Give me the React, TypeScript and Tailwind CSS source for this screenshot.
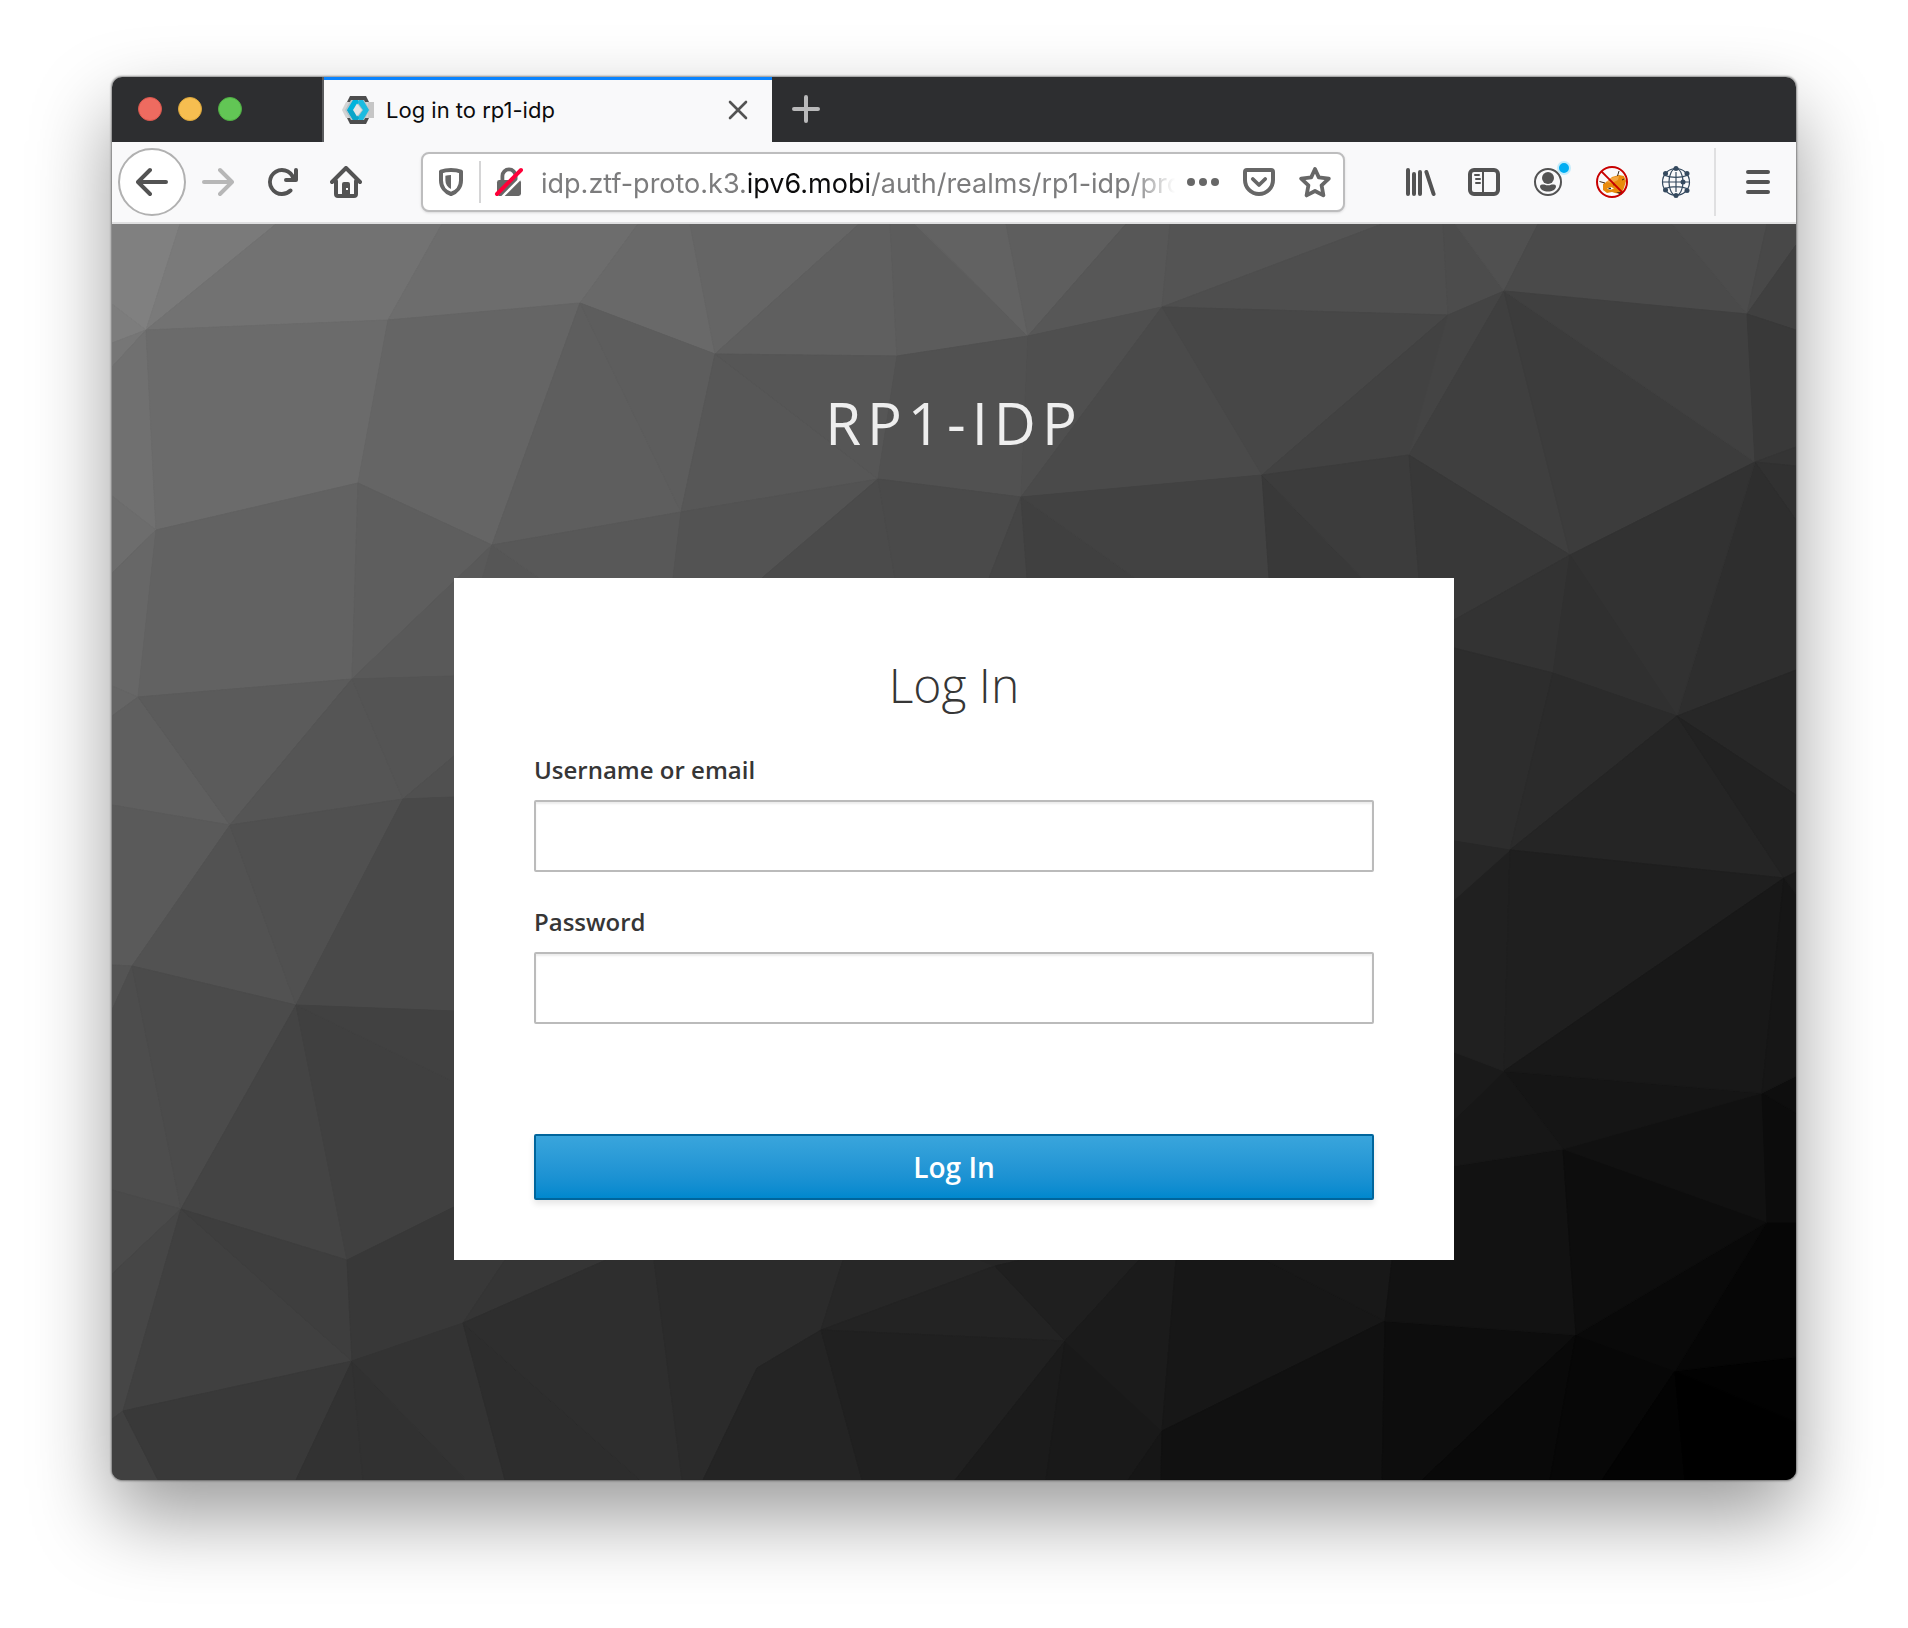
import type { ReactNode } from "react";

const facets: [string, string][] = [
  ["0,0 68,0 34,106 0,80", "#808080"],
  ["68,0 164,0 34,106", "#7a7a7a"],
  ["164,0 330,0 276,96 34,106", "#727272"],
  ["330,0 526,0 468,79 276,96", "#6d6d6d"],
  ["526,0 578,0 603,130 468,79", "#696969"],
  ["578,0 747,0 603,130", "#656565"],
  ["747,0 778,0 785,132 603,130", "#5f5f5f"],
  ["778,0 803,0 916,112 785,132", "#5c5c5c"],
  ["803,0 894,0 916,112", "#626262"],
  ["894,0 1014,0 916,112", "#5e5e5e"],
  ["1014,0 1058,0 1050,83 916,112", "#575757"],
  ["1058,0 1270,0 1050,83", "#545454"],
  ["1270,0 1331,0 1336,91 1050,83", "#4e4e4e"],
  ["1331,0 1343,0 1392,67 1336,91", "#4c4c4c"],
  ["1343,0 1426,0 1392,67", "#505050"],
  ["1426,0 1560,0 1635,90 1392,67", "#4a4a4a"],
  ["1560,0 1655,0 1635,90", "#4c4c4c"],
  ["1655,0 1684,0 1684,21 1635,90", "#484848"],
  ["1684,21 1684,106 1635,90", "#404040"],
  ["0,80 34,106 0,119", "#7d7d7d"],
  ["0,119 34,106 0,143", "#767676"],
  ["0,143 34,106 44,306 0,272", "#707070"],
  ["34,106 276,96 246,259 44,306", "#6b6b6b"],
  ["276,96 468,79 380,321 246,259", "#656565"],
  ["468,79 569,288 380,321", "#5e5e5e"],
  ["468,79 603,130 569,288", "#5d5d5d"],
  ["603,130 766,255 569,288", "#575757"],
  ["603,130 785,132 766,255", "#565656"],
  ["785,132 916,112 909,273 766,255", "#515151"],
  ["916,112 1050,83 909,273", "#4f4f4f"],
  ["1050,83 1150,251 909,273", "#4a4a4a"],
  ["1050,83 1336,91 1150,251", "#474747"],
  ["1336,91 1297,231 1150,251", "#424242"],
  ["1336,91 1392,67 1297,231", "#444444"],
  ["1392,67 1458,331 1297,231", "#3f3f3f"],
  ["1392,67 1643,238 1458,331", "#3c3c3c"],
  ["1392,67 1635,90 1643,238", "#404040"],
  ["1635,90 1684,106 1684,223 1643,238", "#393939"],
  ["1643,238 1684,223 1684,242", "#353535"],
  ["1643,238 1684,242 1684,296", "#313131"],
  ["1643,238 1684,296 1684,446 1565,492", "#2e2e2e"],
  ["1643,238 1565,492 1458,331", "#323232"],
  ["0,272 44,306 0,349", "#6d6d6d"],
  ["0,349 44,306 26,473 0,462", "#676767"],
  ["44,306 246,259 240,455 26,473", "#626262"],
  ["246,259 380,321 240,455", "#5e5e5e"],
  ["380,321 394,354 342,452 240,455", "#595959"],
  ["380,321 427,354 342,452", "#565656"],
  ["380,321 569,288 561,354 427,354", "#585858"],
  ["569,288 766,255 650,354 561,354", "#535353"],
  ["766,255 783,354 783,600 650,354", "#4b4b4b"],
  ["766,255 909,273 877,354 783,354", "#4a4a4a"],
  ["909,273 915,354 877,354", "#454545"],
  ["909,273 1023,354 915,354", "#404040"],
  ["909,273 1150,251 1157,354 1023,354", "#424242"],
  ["1150,251 1250,354 1157,354", "#393939"],
  ["1150,251 1297,231 1307,354 1250,354", "#3c3c3c"],
  ["1297,231 1458,331 1342,396 1307,354", "#383838"],
  ["1458,331 1441,449 1342,424 1342,396", "#333333"],
  ["1458,331 1565,492 1441,449", "#303030"],
  ["1342,424 1441,449 1398,626 1342,617", "#2d2d2d"],
  ["1441,449 1565,492 1398,626", "#2b2b2b"],
  ["1565,492 1672,654 1398,626", "#252525"],
  ["1565,492 1684,446 1684,571", "#272727"],
  ["1565,492 1684,571 1684,648 1672,654", "#222222"],
  ["0,462 26,473 0,492", "#656565"],
  ["0,492 26,473 118,601 0,581", "#5f5f5f"],
  ["26,473 240,455 118,601", "#5b5b5b"],
  ["240,455 291,575 118,601", "#555555"],
  ["240,455 342,452 342,532 291,575", "#545454"],
  ["342,532 342,573 291,575", "#505050"],
  ["0,581 118,601 20,742 0,741", "#5a5a5a"],
  ["118,601 184,781 20,742", "#525252"],
  ["118,601 291,575 184,781", "#505050"],
  ["291,575 342,573 342,787 184,781", "#494949"],
  ["0,741 20,742 0,786", "#545454"],
  ["20,742 69,985 0,966 0,786", "#4d4d4d"],
  ["20,742 184,781 69,985", "#4b4b4b"],
  ["184,781 235,1036 69,985", "#444444"],
  ["184,781 342,858 342,983 235,1036", "#404040"],
  ["184,781 342,787 342,858", "#414141"],
  ["0,966 69,985 0,1050", "#4a4a4a"],
  ["0,1050 69,985 11,1187 0,1195", "#464646"],
  ["69,985 240,1137 11,1187", "#404040"],
  ["69,985 235,1036 240,1137", "#3e3e3e"],
  ["235,1036 342,983 393,1036 351,1099 240,1137", "#383838"],
  ["393,1036 494,1036 351,1099", "#353535"],
  ["0,1195 11,1187 46,1256 0,1256", "#404040"],
  ["11,1187 240,1137 184,1256 46,1256", "#393939"],
  ["240,1137 251,1256 184,1256", "#323232"],
  ["240,1137 354,1256 251,1256", "#313131"],
  ["240,1137 351,1099 393,1256 354,1256", "#333333"],
  ["351,1099 528,1256 393,1256", "#2d2d2d"],
  ["351,1099 494,1036 542,1036 570,1256 528,1256", "#2e2e2e"],
  ["542,1036 731,1036 709,1106 645,1144 591,1256 570,1256", "#2b2b2b"],
  ["731,1036 868,1036 883,1042 709,1106", "#272727"],
  ["868,1036 909,1036 883,1042", "#252525"],
  ["709,1106 883,1042 953,1117", "#232323"],
  ["645,1144 709,1106 750,1256 591,1256", "#242424"],
  ["709,1106 953,1117 843,1256 750,1256", "#202020"],
  ["883,1042 909,1036 1027,1036 953,1117", "#1f1f1f"],
  ["953,1117 934,1256 843,1256", "#1b1b1b"],
  ["953,1117 1050,1207 1016,1256 934,1256", "#191919"],
  ["1027,1036 1064,1036 1050,1207 953,1117", "#1b1b1b"],
  ["1050,1207 1049,1256 1016,1256", "#161616"],
  ["1064,1036 1153,1036 1273,1097 1050,1207", "#171717"],
  ["1153,1036 1280,1036 1273,1097", "#181818"],
  ["1273,1097 1270,1256 1049,1256 1050,1207", "#111111"],
  ["1273,1097 1464,1111 1310,1256 1270,1256", "#0d0d0d"],
  ["1280,1036 1342,942 1451,925 1464,1111 1273,1097", "#121212"],
  ["1464,1111 1438,1256 1310,1256", "#090909"],
  ["1464,1111 1563,1147 1490,1256 1438,1256", "#070707"],
  ["1563,1147 1573,1256 1490,1256", "#030303"],
  ["1563,1147 1684,1198 1684,1256 1573,1256", "#000000"],
  ["1563,1147 1684,1133 1684,1198", "#020202"],
  ["1655,998 1684,998 1684,1133 1563,1147", "#060606"],
  ["1655,998 1563,1147 1464,1111", "#090909"],
  ["1451,925 1655,998 1464,1111", "#0d0d0d"],
  ["1451,925 1650,869 1655,998", "#111111"],
  ["1650,869 1684,889 1684,998 1655,998", "#0c0c0c"],
  ["1650,869 1684,852 1684,889", "#0e0e0e"],
  ["1392,847 1650,869 1451,925", "#151515"],
  ["1342,896 1392,847 1451,925 1342,942", "#171717"],
  ["1342,828 1392,847 1342,896", "#1a1a1a"],
  ["1342,676 1398,626 1392,847 1342,828", "#202020"],
  ["1342,617 1398,626 1342,676", "#272727"],
  ["1398,626 1672,654 1392,847", "#1f1f1f"],
  ["1672,654 1650,869 1392,847", "#181818"],
  ["1672,654 1684,670 1684,852 1650,869", "#161616"],
  ["1672,654 1684,648 1684,670", "#1a1a1a"],
];

function PolygonBackdrop() {
  return (
    <svg
      aria-hidden="true"
      className="absolute inset-0 h-full w-full"
      viewBox="0 0 1684 1256"
      preserveAspectRatio="none"
    >
      <rect width="1684" height="1256" fill="#303030" />
      {facets.map(([points, fill]) => (
        <polygon key={points} points={points} fill={fill} stroke={fill} strokeWidth="1" strokeLinejoin="round" />
      ))}
    </svg>
  );
}

function Icon({ children, className = "" }: { children: ReactNode; className?: string }) {
  return (
    <svg aria-hidden="true" viewBox="0 0 16 16" className={`size-8 shrink-0 ${className}`} fill="currentColor">
      {children}
    </svg>
  );
}

function ToolButton({ label, children }: { label: string; children: ReactNode }) {
  return (
    <button type="button" aria-label={label} className="relative flex h-16 w-16 shrink-0 items-center justify-center text-[#535353]">
      {children}
    </button>
  );
}

function Favicon() {
  return (
    <svg aria-hidden="true" viewBox="0 0 32 32" className="size-8 shrink-0">
      <path d="M8 2h16l3 6H5z" fill="#4d4d4d" />
      <path d="M5 24h22l-3 6H8z" fill="#4d4d4d" />
      <path d="M4 8h28v16H4l-4-8z" fill="#d4d4d4" />
      <path d="M26 8h6v16h-6z" fill="#c6c6c6" />
      <path d="M9 6h13l6 10-6 10H9L3 16z" fill="#b4c4c9" />
      <path d="M11 6h5l1 2-4 8 4 8-1 2h-5L5 16z" fill="#00b3dc" />
      <path d="M17 6h4l6 10-6 10h-4l-1-3 5-7-5-7z" fill="#1cbbe0" />
      <path d="M5 16h8l4 8-1 2h-5z" fill="#0ca5c9" />
      <path d="M15 9.500l5 6.500-5 6.500-4-6.500z" fill="#e6e6e6" />
    </svg>
  );
}

function TabStrip() {
  return (
    <div className="flex h-[65px] bg-[#2d2e30]">
      <div className="flex w-[212px] shrink-0 items-center gap-4 border-r-2 border-[#5a5b5d] pb-0.5 pl-[26px]">
        <button type="button" aria-label="Close window" className="size-6 rounded-full border border-[#d9564d] bg-[#ee6b60]" />
        <button type="button" aria-label="Minimize window" className="size-6 rounded-full border border-[#dba63b] bg-[#f6be50]" />
        <button type="button" aria-label="Zoom window" className="size-6 rounded-full border border-[#4fae43] bg-[#62c655]" />
      </div>
      <div className="flex w-[448px] items-center border-t-[3px] border-[#0a84ff] bg-[#f9f9fa] pr-6 pb-0.5 pl-[18px]">
        <Favicon />
        <span className="ml-3 flex-1 truncate text-[22px] text-[#0c0c0d]">Log in to rp1-idp</span>
        <button type="button" aria-label="Close tab" className="text-[#535353]">
          <svg aria-hidden="true" viewBox="0 0 20 20" className="size-5" stroke="currentColor" strokeWidth="2.6" strokeLinecap="round">
            <path d="M2 2l16 16M18 2L2 18" />
          </svg>
        </button>
      </div>
      <button type="button" aria-label="New tab" className="flex w-[68px] items-center justify-center pb-0.5 text-[#b9b9ba]">
        <svg aria-hidden="true" viewBox="0 0 28 28" className="size-7" stroke="currentColor" strokeWidth="4" strokeLinecap="round">
          <path d="M14 2v24M2 14h24" />
        </svg>
      </button>
    </div>
  );
}

function AddressBar() {
  return (
    <div className="flex h-[60px] min-w-0 flex-1 items-center rounded-lg border-2 border-[#bdbdbe] bg-white pr-3 text-[#676767] shadow-sm">
      <button type="button" aria-label="Tracking protection" className="ml-3 flex">
        <Icon>
          <path
            d="M8 2c2.1 0 3.7.3 5 .8v4.4c0 3.300-2.200 5.800-5 6.800-2.800-1-5-3.500-5-6.800V2.800C4.300 2.300 5.900 2 8 2z"
            fill="none"
            stroke="currentColor"
            strokeWidth="2"
            strokeLinejoin="round"
          />
          <path d="M8 4.500v7C6.200 10.600 5.200 9.200 5.200 7V4.900C6 4.600 7 4.500 8 4.500z" />
        </Icon>
      </button>
      <div className="mx-3 h-[42px] w-[2px] bg-[#d5d5d6]" />
      <button type="button" aria-label="Connection is not secure" className="flex">
        <Icon>
          <path d="M4.700 7.500V5a3.300 3.300 0 0 1 6.600 0v2.500" fill="none" stroke="currentColor" strokeWidth="1.900" />
          <rect x="2" y="7" width="12" height="8" rx="1.200" />
          <path d="M4 16L16.500 3.500" stroke="#ffffff" strokeWidth="1.200" />
          <path d="M2 14L14 2" stroke="#ff0039" strokeWidth="2" strokeLinecap="round" />
        </Icon>
      </button>
      <div
        role="textbox"
        aria-label="Address"
        className="ml-4 min-w-0 flex-1 overflow-hidden pt-1 text-[27px] whitespace-nowrap text-[#7c7c7d] [mask-image:linear-gradient(to_right,black_calc(100%-44px),transparent)]"
      >
        idp.ztf-proto.k3.<span className="text-[#0c0c0d]">ipv6.mobi</span>/auth/realms/rp1-idp/protocol
      </div>
      <div className="ml-3 flex shrink-0 items-center gap-6">
        <button type="button" aria-label="Page actions" className="flex">
          <Icon>
            <circle cx="2" cy="8" r="2" />
            <circle cx="8" cy="8" r="2" />
            <circle cx="14" cy="8" r="2" />
          </Icon>
        </button>
        <button type="button" aria-label="Save to Pocket" className="flex">
          <Icon>
            <path
              d="M2 2h12a1 1 0 0 1 1 1v4a7 7 0 0 1-14 0V3a1 1 0 0 1 1-1z"
              fill="none"
              stroke="currentColor"
              strokeWidth="2"
            />
            <path d="M4.900 6.500L8 9.500l3.100-3" fill="none" stroke="currentColor" strokeWidth="1.900" strokeLinecap="round" strokeLinejoin="round" />
          </Icon>
        </button>
        <button type="button" aria-label="Bookmark this page" className="flex">
          <Icon>
            <path
              d="M8 1.500l1.900 4.200 5 .6-3.600 3.400.9 5L8 12.500l-4.200 2.200.9-5L1.100 6.300l5-.6z"
              fill="none"
              stroke="currentColor"
              strokeWidth="1.900"
              strokeLinejoin="round"
            />
          </Icon>
        </button>
      </div>
    </div>
  );
}

function FoxIcon() {
  return (
    <svg aria-hidden="true" viewBox="0 0 32 32" className="size-8">
      <path d="M6 21l3 6 6 2 9-1 5-2 1-6z" fill="#ffffff" />
      <path d="M7 18l5-3 4-4 7-2 5 1 2 5-2 7-3 6-6-1-3-1-5 1-4-3z" fill="#e98b0c" />
      <path d="M10 16l5-4 8-2-1 4-6 3z" fill="#f3a742" />
      <path d="M3.500 15.500l5.500 1.500M23 5l-1.500 5M17 19l2-1M26 14l2-1" stroke="#3c2a16" strokeWidth="1" />
      <path d="M11 22.500l4-1.500 3 1.500-4 1.500z" fill="#ffffff" />
      <path d="M12.500 22.500h2.500" stroke="#222222" strokeWidth="1.500" />
      <path d="M20 26l5 3 2-3z" fill="#5b3713" />
      <circle cx="16" cy="16" r="15" fill="none" stroke="#c80000" strokeWidth="2" />
      <path d="M5.400 5.400l21.200 21.200" stroke="#c80000" strokeWidth="2" />
    </svg>
  );
}

function GlobeIcon() {
  return (
    <svg aria-hidden="true" viewBox="0 0 32 32" className="size-8 text-[#34495e]" fill="none" stroke="currentColor" strokeWidth="1.200">
      <circle cx="16" cy="16" r="13.500" />
      <ellipse cx="16" cy="16" rx="7" ry="13.500" />
      <path d="M16 6v20M2.500 16h27M5 9.500c6 2.500 16 2.500 22 0M5 22.500c6-2.500 16-2.500 22 0" />
      <g fill="currentColor" stroke="none">
        <circle cx="16" cy="2.500" r="2.500" />
        <circle cx="16" cy="29.500" r="2.500" />
        <circle cx="5.500" cy="7.500" r="2.500" />
        <circle cx="27" cy="7.500" r="2.500" />
        <circle cx="5.500" cy="24" r="2.500" />
        <circle cx="27" cy="24.500" r="2.500" />
        <circle cx="23" cy="16" r="2.500" />
      </g>
    </svg>
  );
}

function Toolbar() {
  return (
    <div className="flex h-[82px] items-center border-b-2 border-[#e0e0e1] bg-[#f9f9fa] px-[6px]">
      <button
        type="button"
        aria-label="Back"
        className="flex size-[68px] shrink-0 items-center justify-center rounded-full border-2 border-[#b1b1b1] bg-white text-[#535353]"
      >
        <Icon>
          <path d="M15 7H3.414l4.293-4.293a1 1 0 0 0-1.414-1.414l-6 6a1 1 0 0 0 0 1.414l6 6a1 1 0 0 0 1.414-1.414L3.414 9H15a1 1 0 0 0 0-2z" />
        </Icon>
      </button>
      <ToolButton label="Forward">
        <Icon className="text-[#b7b7b7]">
          <path d="M1 7h11.586L8.293 2.707a1 1 0 0 1 1.414-1.414l6 6a1 1 0 0 1 0 1.414l-6 6a1 1 0 0 1-1.414-1.414L12.586 9H1a1 1 0 0 1 0-2z" />
        </Icon>
      </ToolButton>
      <ToolButton label="Reload">
        <Icon>
          <path d="M15 1a1 1 0 0 0-1 1v2.418A6.995 6.995 0 1 0 8 15a6.954 6.954 0 0 0 4.950-2.050 1 1 0 0 0-1.414-1.414A5.019 5.019 0 1 1 12.549 6H10a1 1 0 0 0 0 2h5a1 1 0 0 0 1-1V2a1 1 0 0 0-1-1z" />
        </Icon>
      </ToolButton>
      <ToolButton label="Home">
        <Icon>
          <path d="M1 8l7-7 7 7M3 7.500V14a1 1 0 0 0 1 1h8a1 1 0 0 0 1-1V7.500" fill="none" stroke="currentColor" strokeWidth="2" strokeLinecap="round" strokeLinejoin="round" />
          <path fillRule="evenodd" d="M6 15V9a1 1 0 0 1 1-1h2a1 1 0 0 1 1 1v6zM8 11v1h1v-1z" />
        </Icon>
      </ToolButton>
      <div className="w-[43px] shrink-0" />
      <AddressBar />
      <div className="w-[43px] shrink-0" />
      <ToolButton label="Library">
        <Icon>
          <g fill="none" stroke="currentColor" strokeWidth="2" strokeLinecap="round">
            <path d="M2 2v12M5 4v10M8 3v11M11.200 3L14.800 14" />
          </g>
        </Icon>
      </ToolButton>
      <ToolButton label="Sidebars">
        <Icon>
          <rect x="1" y="2" width="14" height="12" rx="2" fill="none" stroke="currentColor" strokeWidth="2" />
          <path d="M7.500 2v12M3.500 4.500h2M4 6.500h2M4 8.500h2" fill="none" stroke="currentColor" strokeWidth="1" strokeLinecap="round" />
        </Icon>
      </ToolButton>
      <ToolButton label="Account">
        <Icon>
          <circle cx="8" cy="8" r="6.500" fill="none" stroke="currentColor" strokeWidth="1" />
          <circle cx="8" cy="6" r="3" />
          <path d="M5 9.200h1.200c1.200.6 2.400.6 3.600 0H11a1 1 0 0 1 1 1c0 1.500-2 2.500-4 2.500s-4-1-4-2.500a1 1 0 0 1 1-1z" />
        </Icon>
        <span className="absolute top-[11px] right-[9px] size-[14px] rounded-full border-2 border-[#c3ecfb] bg-[#00adf2]" />
      </ToolButton>
      <ToolButton label="Fox blocker">
        <FoxIcon />
      </ToolButton>
      <ToolButton label="Network">
        <GlobeIcon />
      </ToolButton>
      <div className="mr-[10px] ml-[6px] h-[68px] w-[2px] shrink-0 bg-[#e0e0e1]" />
      <ToolButton label="Menu">
        <Icon>
          <path d="M3 3h10M3 8h10M3 13h10" stroke="currentColor" strokeWidth="2" strokeLinecap="round" />
        </Icon>
      </ToolButton>
    </div>
  );
}

function Field({ id, label, type }: { id: string; label: string; type: string }) {
  return (
    <div className="flex flex-col gap-2.5">
      <label htmlFor={id} className="text-2xl/10 font-semibold text-[#363636]">
        {label}
      </label>
      <input
        id={id}
        type={type}
        className="h-[72px] w-full rounded-xs border-2 border-[#bbbbbb] bg-white px-3 text-2xl shadow-[inset_0_2px_2px_rgba(3,3,3,0.075)] outline-none"
      />
    </div>
  );
}

function LoginCard() {
  return (
    <form
      onSubmit={(event) => event.preventDefault()}
      className="flex w-full max-w-[1000px] flex-col bg-white px-20 pt-20 pb-[60px]"
    >
      <h2 className="text-center text-5xl/[54px] font-light text-[#363636]">Log In</h2>
      <div className="mt-[38px] flex flex-col gap-[30px]">
        <Field id="username" label="Username or email" type="text" />
        <Field id="password" label="Password" type="password" />
      </div>
      <button
        type="submit"
        className="mt-[110px] h-[66px] w-full rounded-xs border-2 border-[#00659c] bg-linear-to-b from-[#39a5dc] to-[#0088ce] text-[28px] font-semibold text-white shadow-[0_4px_6px_rgba(3,3,3,0.1)]"
      >
        Log In
      </button>
    </form>
  );
}

export default function App() {
  return (
    <div className="min-h-screen bg-white px-28 pt-[77px] pb-[148px] font-['Inter',sans-serif]">
      <div className="overflow-hidden rounded-[10px] shadow-[0_0_2px_1px_rgba(0,0,0,0.4),0_36px_80px_rgba(0,0,0,0.4)]">
        <TabStrip />
        <Toolbar />
        <main className="relative font-['Open_Sans',sans-serif]">
          <PolygonBackdrop />
          <div className="relative flex flex-col items-center pb-[220px]">
            <h1 className="pt-[164px] pb-[120px] text-[58px]/[70px] tracking-[6px] text-[#eeeeee] uppercase">rp1-idp</h1>
            <LoginCard />
          </div>
        </main>
      </div>
    </div>
  );
}
